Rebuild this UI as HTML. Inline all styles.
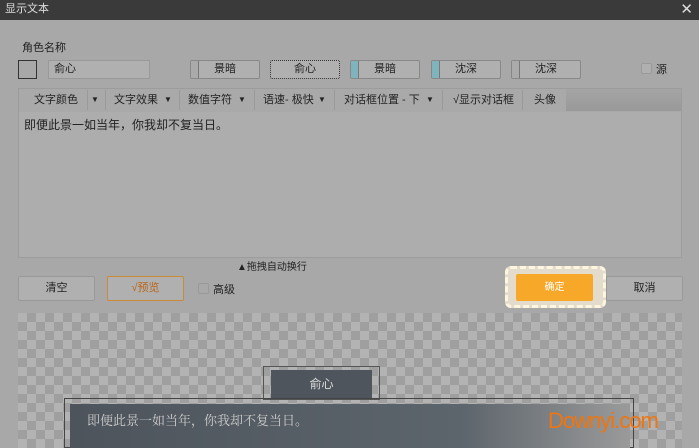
<!DOCTYPE html>
<html><head><meta charset="utf-8"><style>
*{margin:0;padding:0;box-sizing:border-box}
body{width:699px;height:448px;overflow:hidden;background:#a8a8a8;font-family:"Liberation Sans","Noto Sans CJK SC",sans-serif;font-size:11px;color:#222;position:relative}
.a{position:absolute}
.btn{position:absolute;border:1px solid #888;border-radius:2px;background:#b0b0b0;text-align:center;line-height:17px;font-size:11px}
.btn i{position:absolute;left:0;top:0;bottom:0;width:8px;border-right:1px solid #777}
.tb{position:absolute;top:88px;height:24px;line-height:24px;font-size:11px;color:#222}
.sep{position:absolute;top:90px;width:1px;height:20px;background:#9a9a9a}
.checker{background-color:#b3b3b3;background-image:linear-gradient(45deg,#9f9f9f 25%,transparent 25%,transparent 75%,#9f9f9f 75%),linear-gradient(45deg,#9f9f9f 25%,transparent 25%,transparent 75%,#9f9f9f 75%);background-size:18px 18px;background-position:0 0,9px 9px}
</style></head><body>
<div class="a" style="left:0;top:0;width:699px;height:20px;background:#3a3a3a;color:#ddd;font-size:11px;line-height:19px;padding-left:5px">显示文本</div>
<div class="a" style="right:6px;top:1px;color:#ddd;font-size:15px;line-height:17px">✕</div>
<div class="a" style="left:22px;top:39px;font-size:11px">角色名称</div>
<div class="a" style="left:18px;top:60px;width:19px;height:19px;border:1px solid #333"></div>
<div class="a" style="left:48px;top:60px;width:102px;height:19px;border:1px solid #999;background:#b0b0b0;line-height:17px;padding-left:5px">俞心</div>
<div class="btn" style="left:190px;top:60px;width:70px;height:19px"><i style="background:#aaa"></i>景暗</div>
<div class="btn" style="left:270px;top:60px;width:70px;height:19px;border:1px dotted #333">俞心</div>
<div class="btn" style="left:350px;top:60px;width:70px;height:19px"><i style="background:#7fb3bd"></i>景暗</div>
<div class="btn" style="left:431px;top:60px;width:70px;height:19px"><i style="background:#7fb3bd"></i>沈深</div>
<div class="btn" style="left:511px;top:60px;width:70px;height:19px"><i style="background:#aaa"></i>沈深</div>
<div class="a" style="left:641px;top:63px;width:11px;height:11px;border:1px solid #999;border-radius:2px;background:#b0b0b0"></div>
<div class="a" style="left:656px;top:61px">源</div>
<div class="a" style="left:18px;top:88px;width:664px;height:170px;border:1px solid #9c9c9c;background:#adadad"></div>
<div class="a" style="left:19px;top:89px;width:662px;height:23px;background:#a9a9a9"></div>
<div class="a" style="left:566px;top:89px;width:115px;height:22px;background:linear-gradient(#a5a5a5,#999)"></div>
<div class="tb" style="left:34px">文字颜色</div><div class="sep" style="left:87px"></div>
<div class="tb" style="left:91px;font-size:8px">▼</div><div class="sep" style="left:105px"></div>
<div class="tb" style="left:114px">文字效果</div><div class="tb" style="left:164px;font-size:8px">▼</div><div class="sep" style="left:179px"></div>
<div class="tb" style="left:188px">数值字符</div><div class="tb" style="left:238px;font-size:8px">▼</div><div class="sep" style="left:254px"></div>
<div class="tb" style="left:263px">语速- 极快</div><div class="tb" style="left:318px;font-size:8px">▼</div><div class="sep" style="left:334px"></div>
<div class="tb" style="left:344px">对话框位置 - 下</div><div class="tb" style="left:426px;font-size:8px">▼</div><div class="sep" style="left:442px"></div>
<div class="tb" style="left:453px">√显示对话框</div><div class="sep" style="left:522px"></div>
<div class="tb" style="left:534px">头像</div>
<div class="a" style="left:24px;top:116px;font-size:12px">即便此景一如当年，你我却不复当日。</div>
<div class="a" style="left:237px;top:258px;font-size:10px">▲拖拽自动换行</div>
<div class="btn" style="left:18px;top:276px;width:77px;height:25px;line-height:23px;border-color:#999">清空</div>
<div class="btn" style="left:107px;top:276px;width:77px;height:25px;line-height:23px;border-color:#c98a3a;color:#b8661a">√预览</div>
<div class="a" style="left:198px;top:283px;width:11px;height:11px;border:1px solid #999;border-radius:2px"></div>
<div class="a" style="left:213px;top:281px">高级</div>
<div class="a" style="left:505px;top:266px;width:101px;height:42px;border:3px dashed #fff6e0;border-radius:6px;background:#e3dccd"></div>
<div class="a" style="left:516px;top:274px;width:77px;height:27px;background:#f7a829;border-radius:2px;color:#fff;text-align:center;line-height:27px;font-size:10px">确定</div>
<div class="btn" style="left:606px;top:276px;width:77px;height:25px;line-height:23px;border-color:#999">取消</div>
<div class="a checker" style="left:18px;top:313px;width:664px;height:135px"></div>
<div class="a" style="left:263px;top:366px;width:117px;height:34px;border:1px solid #555"></div>
<div class="a" style="left:271px;top:370px;width:101px;height:28px;background:#4e555c;color:#ddd;text-align:center;line-height:28px;font-size:12px">俞心</div>
<div class="a" style="left:64px;top:398px;width:570px;height:50px;border:1px solid #444"></div>
<div class="a" style="left:70px;top:404px;width:560px;height:44px;background:linear-gradient(90deg,#4d545c,#5d656c 70%,#9a9a9a)"></div>
<div class="a" style="left:87px;top:410px;color:#ccc;font-size:13px;font-family:'Noto Serif CJK SC',serif">即便此景一如当年，你我却不复当日。</div>
<div class="a" style="left:548px;top:408px;color:#f0750e;font-size:22px;letter-spacing:-1px">Downyi.com</div>
</body></html>
